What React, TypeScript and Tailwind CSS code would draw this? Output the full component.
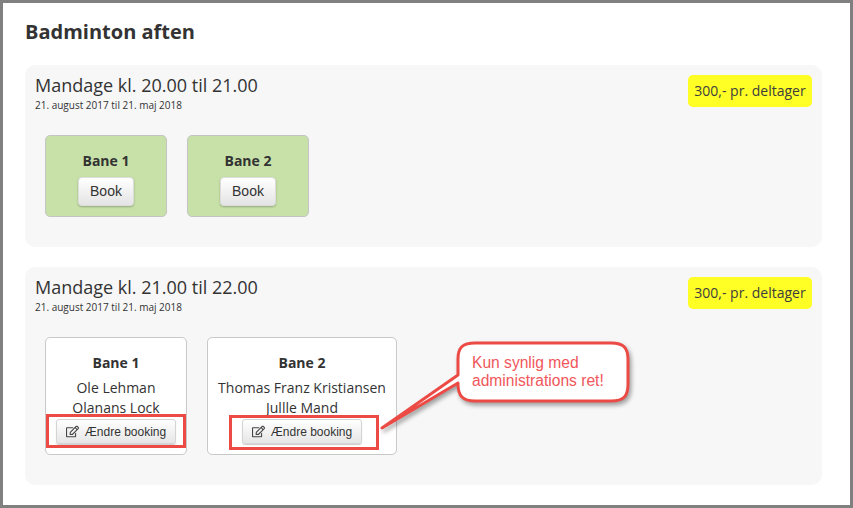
import { FaRegEdit } from 'react-icons/fa'

const openSans = "font-['Open_Sans',sans-serif]"
const arial = "font-['Liberation_Sans',Arial,sans-serif]"

const Price = () => (
  <div className="h-8 w-[124px] rounded-[5px] bg-[#ffff26] text-center text-[14px] leading-8 text-[#3d3d3d]">300,- pr. deltager</div>
)

const SlotHeader = ({ title }: { title: string }) => (
  <div className="flex items-start justify-between">
    <div className="-mt-[1px]">
      <h2 className="text-[18px] leading-[22px] text-[#333]">{title}</h2>
      <p className="mt-[2px] text-[10px] leading-[14px] text-[#333]">21. august 2017 til 21. maj 2018</p>
    </div>
    <Price />
  </div>
)

const FreeCourt = ({ name }: { name: string }) => (
  <div className="flex h-[82px] w-[122px] flex-col items-center rounded-[5px] border border-[#c4c4c4] bg-[#c7e1a8] pt-[15px]">
    <div className="text-[14px] leading-5 font-bold text-[#333]">{name}</div>
    <button className={`${arial} mt-[6px] h-[29px] w-[56px] rounded-[4px] border border-[#ddd] bg-gradient-to-b from-white to-[#e4e4e4] text-[14px] text-[#333] shadow-[0_1px_2px_rgba(0,0,0,0.25)]`}>
      Book
    </button>
  </div>
)

const BookedCourt = ({ name, players, width }: { name: string; players: string[]; width: string }) => (
  <div className={`${width} flex h-[118px] flex-col items-center rounded-[5px] border border-[#c9c9c9] bg-white pt-[15px]`}>
    <div className="text-[14px] leading-5 font-bold text-[#333]">{name}</div>
    <div className="mt-[5px] text-center text-[14px] leading-5 text-[#333]">
      {players.map((p) => (
        <div key={p}>{p}</div>
      ))}
    </div>
    <button className={`${arial} mt-[1px] flex h-[25px] w-[120px] items-center justify-center gap-[6px] rounded-[3px] border border-[#d4d4d4] bg-gradient-to-b from-white to-[#e6e6e6] text-[12px] text-[#333] shadow-[0_1px_1px_rgba(0,0,0,0.2)]`}>
      <FaRegEdit size={13} color="#444" />
      Ændre booking
    </button>
  </div>
)

export default function App() {
  return (
    <div className={`${openSans} relative h-[508px] w-[853px] overflow-hidden border-[3px] border-[#808080] bg-white pt-[17px] pr-[28px] pl-[22px]`}>
      <h1 className="text-[20px] leading-6 font-bold text-[#333]">Badminton aften</h1>

      <section className="mt-[21px] h-[182px] rounded-[10px] bg-[#f7f7f7] px-[10px] pt-[10px]">
        <SlotHeader title="Mandage kl. 20.00 til 21.00" />
        <div className="mt-[23px] flex gap-5 pl-[10px]">
          <FreeCourt name="Bane 1" />
          <FreeCourt name="Bane 2" />
        </div>
      </section>

      <section className="mt-5 h-[218px] rounded-[10px] bg-[#f7f7f7] px-[10px] pt-[10px]">
        <SlotHeader title="Mandage kl. 21.00 til 22.00" />
        <div className="mt-[23px] flex gap-5 pl-[10px]">
          <BookedCourt name="Bane 1" players={['Ole Lehman', 'Olanans Lock']} width="w-[142px]" />
          <BookedCourt name="Bane 2" players={['Thomas Franz Kristiansen', 'Jullle Mand']} width="w-[190px]" />
        </div>
      </section>

      {/* annotation layer, coordinates are relative to the padding box */}
      <div className="absolute top-[411px] left-[43px] h-[34px] w-[140px] border-[3px] border-[#ec4a45]" />
      <div className="absolute top-[412px] left-[226px] h-[35px] w-[150px] border-[3px] border-[#ec4a45]" />
      <svg className="absolute top-[336px] left-[372px] drop-shadow-[2px_3px_2px_rgba(0,0,0,0.35)]" width="264" height="100" viewBox="0 0 264 100" fill="none">
        <path
          d="M7 89 L83 36 V20 C83 8 88 4 100 4 H236 C249 4 253 9 253 21 V45 C253 57 249 62 236 62 H100 C88 62 83 57 83 45 V44 Z"
          fill="#fff"
          stroke="#ec4a45"
          strokeWidth="3"
          strokeLinejoin="round"
        />
      </svg>
      <div className={`${arial} absolute top-[351px] left-[469px] text-[15.6px] leading-[18px] text-[#f0565a]`}>
        Kun synlig med
        <br />
        administrations ret!
      </div>
    </div>
  )
}
